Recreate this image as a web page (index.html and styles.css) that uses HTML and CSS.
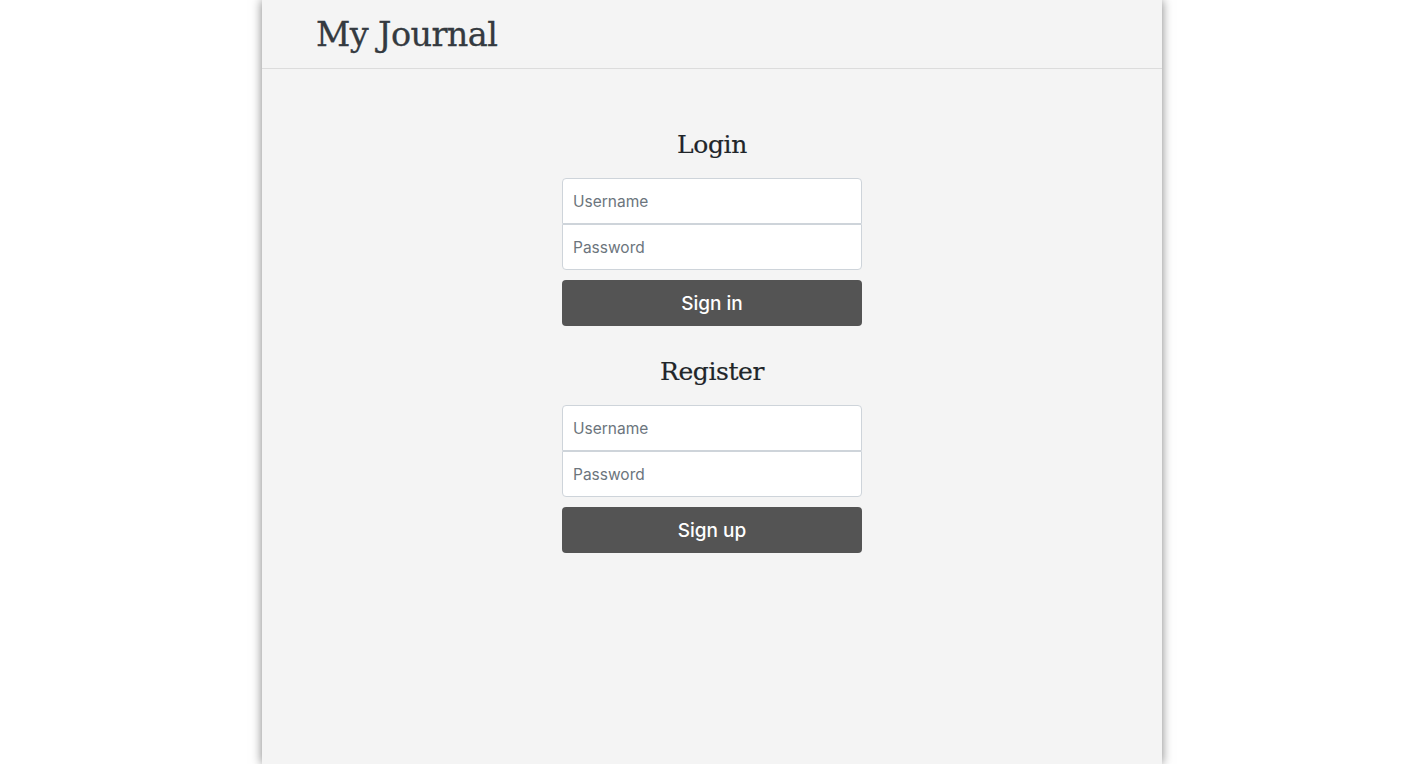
FILE: index.html
```html
<!DOCTYPE html>
<html>
<head>
<meta charset="utf-8">
<link rel="stylesheet" href="styles.css">
</head>
<body>
<div class="page">
  <header class="topbar">
    <h1 class="brand">My Journal</h1>
  </header>
  <main class="content">
    <form class="auth">
      <h2 class="auth-title">Login</h2>
      <div class="field-group">
        <input class="field field-top" type="text" placeholder="Username">
        <input class="field field-bottom" type="password" placeholder="Password">
      </div>
      <button class="btn" type="button">Sign in</button>
    </form>
    <form class="auth">
      <h2 class="auth-title">Register</h2>
      <div class="field-group">
        <input class="field field-top" type="text" placeholder="Username">
        <input class="field field-bottom" type="password" placeholder="Password">
      </div>
      <button class="btn" type="button">Sign up</button>
    </form>
  </main>
</div>
</body>
</html>
```
FILE: styles.css
```css
html, body {
  margin: 0;
  padding: 0;
  background: #ffffff;
  height: 100%;
}
body {
  font-family: Inter, "Liberation Sans", Arial, sans-serif;
  overflow: hidden;
  padding-left: 3px;
  box-sizing: border-box;
}
.page {
  width: 900px;
  min-height: 764px;
  margin: 0 auto;
  background: #f4f4f4;
  box-shadow: 0 0 10px rgba(0, 0, 0, 0.5);
}
.topbar {
  height: 69px;
  border-bottom: 1px solid #dcdcdc;
  box-sizing: border-box;
  padding-left: 54px;
  display: flex;
  align-items: center;
}
.brand {
  margin: 0;
  font-family: "DejaVu Serif", Georgia, serif;
  font-weight: normal;
  font-size: 33.5px;
  color: #343a40;
  letter-spacing: -0.6px;
  -webkit-text-stroke: 0.3px #343a40;
}
.content {
  display: flex;
  flex-direction: column;
  align-items: center;
  padding-top: 57px;
}
.auth {
  width: 300px;
  display: flex;
  flex-direction: column;
  margin-bottom: 27px;
}
.auth-title {
  margin: 0 0 14px;
  text-align: center;
  font-family: "DejaVu Serif", Georgia, serif;
  font-weight: normal;
  font-size: 25px;
  line-height: 38px;
  color: #212529;
  letter-spacing: -0.4px;
  -webkit-text-stroke: 0.2px #212529;
}
.field-group {
  display: flex;
  flex-direction: column;
}
.field {
  height: 46px;
  box-sizing: border-box;
  border: 1px solid #ced4da;
  background: #fff;
  padding: 0 10px;
  font-family: Inter, "Liberation Sans", Arial, sans-serif;
  font-size: 15.5px;
  color: #495057;
  outline: none;
}
.field::placeholder {
  color: #6c757d;
}
.field-top {
  border-radius: 4px 4px 0 0;
}
.field-bottom {
  border-radius: 0 0 4px 4px;
}
.btn {
  margin-top: 10px;
  height: 46px;
  border: none;
  border-radius: 4px;
  background: #545454;
  color: #ffffff;
  font-family: Inter, "Liberation Sans", Arial, sans-serif;
  font-size: 19px;
  font-weight: 500;
  cursor: pointer;
}
```
